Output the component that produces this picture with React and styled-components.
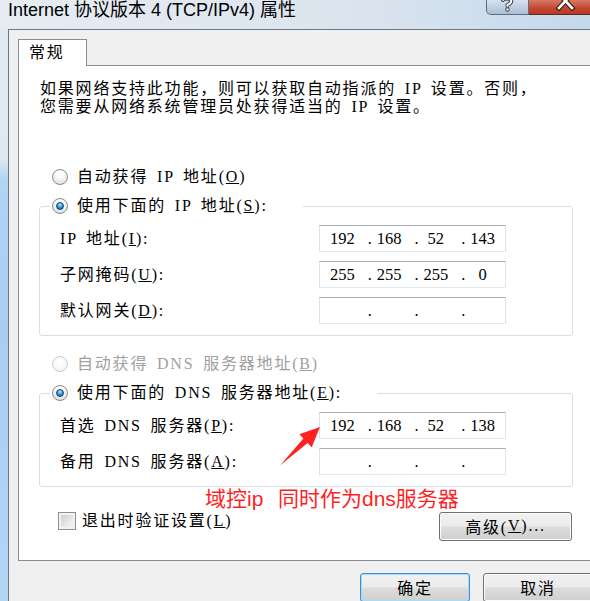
import React from "react";
import styled, { createGlobalStyle } from "styled-components";

const GlobalStyle = createGlobalStyle`
  html, body {
    margin: 0;
    padding: 0;
    background: #f0f0f0;
  }
`;

const uiFont = `"Liberation Serif", "Noto Sans CJK SC", serif`;

const Screen = styled.div`
  width: 590px;
  height: 601px;
  overflow: hidden;
  position: relative;
`;

const Window = styled.div`
  width: 602px;
  display: flex;
  flex-direction: column;
`;

const TitleBar = styled.div`
  height: 29px;
  display: flex;
  justify-content: space-between;
  align-items: flex-start;
  background: linear-gradient(90deg, #e6ecf2 0%, #dbe4ee 60%, #c3d8ec 100%);
`;

const Title = styled.div`
  padding-left: 8px;
  font-family: "Liberation Sans", "Noto Sans CJK SC", sans-serif;
  font-size: 18px;
  line-height: 20px;
  color: #000;
  white-space: nowrap;
`;

const Captions = styled.div`
  display: flex;
`;

const CaptionButton = styled.div`
  width: ${p => p.$width}px;
  height: 15px;
  box-sizing: border-box;
  border: 1px solid ${p => (p.$close ? "#5a2a22" : "#5c6d80")};
  border-top: none;
  border-left-width: ${p => (p.$close ? 0 : 1)}px;
  border-radius: ${p => (p.$close ? "0" : "0 0 0 5px")};
  background: ${p =>
    p.$close
      ? "linear-gradient(180deg, #d77a66 0%, #c4452f 60%, #b73a24 100%)"
      : "linear-gradient(180deg, #d6e2ee 0%, #bccde0 60%, #aabfd5 100%)"};
  overflow: hidden;

  svg {
    display: block;
  }
`;

const Main = styled.div`
  display: flex;
  flex: 1;
`;

const Frame = styled.div`
  width: 8px;
  flex: none;
  background: linear-gradient(
    180deg,
    #e2e9f1 0,
    #e0e8f0 130px,
    #b3d4f3 150px,
    #a9cdf0 300px,
    #b4d6f5 100%
  );
`;

const Body = styled.div`
  flex: 1;
  background: #f0f0f0;
  border-top: 1px solid #68788a;
  border-left: 1px solid #68788a;
  padding: 9px 9px 0 9px;
  display: flex;
  flex-direction: column;
`;

const TabStrip = styled.div`
  display: flex;
`;

const Tab = styled.div`
  width: 69px;
  height: 27px;
  box-sizing: border-box;
  border: 1px solid #898c95;
  border-bottom: none;
  background: #fff;
  margin-bottom: -1px;
  position: relative;
  z-index: 1;
  padding-left: 10px;
  font-family: ${uiFont};
  font-size: 16px;
  letter-spacing: 1.8px;
  line-height: 26px;
`;

const Panel = styled.div`
  height: 496px;
  box-sizing: border-box;
  border: 1px solid #898c95;
  border-right: none;
  background: #fff;
  padding: 14px 20px 0 20px;
  font-family: ${uiFont};
  font-size: 16px;
  letter-spacing: 1.8px;
  word-spacing: 3px;
  color: #000;
  display: flex;
  flex-direction: column;
`;

const Intro = styled.div`
  padding-left: 1px;
  line-height: 18px;
  white-space: nowrap;
`;

const RadioRow = styled.label`
  display: flex;
  align-items: center;
  gap: 9px;
  height: 20px;
  line-height: 20px;
  white-space: nowrap;
  margin-left: ${p => p.$indent || 0}px;
  margin-top: ${p => p.$top || 0}px;
  color: ${p => (p.$disabled ? "#a0a0a0" : "#000")};
`;

const RadioDot = styled.span`
  width: 16px;
  height: 16px;
  flex: none;
  box-sizing: border-box;
  border-radius: 50%;
  border: 1px solid ${p => (p.$disabled ? "#c9c9c9" : "#8a8c8e")};
  background: ${p =>
    p.$disabled
      ? "radial-gradient(circle at 50% 35%, #ffffff, #f1f1f1)"
      : "radial-gradient(circle at 50% 30%, #ffffff 20%, #e6e6e6 70%, #cfcfcf 100%)"};
  display: flex;
  align-items: center;
  justify-content: center;

  &::after {
    content: "";
    display: ${p => (p.$checked ? "block" : "none")};
    width: 8px;
    height: 8px;
    box-sizing: border-box;
    border-radius: 50%;
    border: 1px solid #164569;
    background: radial-gradient(circle at 50% 30%, #b5ecff 0, #3aa0dd 45%, #0e4c7c 100%);
  }
`;

const Group = styled.fieldset`
  margin: 9px 0 0 0;
  padding: 9px 0 11px 20px;
  min-width: 0;
  border: 1px solid #d5dfe5;
  border-radius: 3px;
`;

const Legend = styled.legend`
  margin-left: -10px;
  padding: 0 35px 0 2px;
  background: #fff;
`;

const Rows = styled.div`
  display: grid;
  grid-template-columns: 259px 187px;
  row-gap: 9px;
  align-items: center;
`;

const Label = styled.span`
  white-space: nowrap;
  margin-top: -3px;
`;

const IpBox = styled.div`
  width: 187px;
  height: 27px;
  box-sizing: border-box;
  border: 1px solid;
  border-color: #abadb3 #dfe2e8 #e3e9ef #dfe2e8;
  background: #fff;
  padding-left: 6px;
  display: flex;
  align-items: center;
  font-size: 16.5px;
  letter-spacing: 0;
  word-spacing: 0;
  line-height: 25px;
`;

const IpField = styled.span`
  width: 40.75px;
  flex: none;
  box-sizing: border-box;
  padding-right: 8.25px;
  text-align: center;
`;

const IpDot = styled.span`
  width: 6px;
  flex: none;
  text-align: center;
`;

const BottomRow = styled.div`
  margin-top: 25px;
  margin-right: 1px;
  display: flex;
  justify-content: space-between;
  align-items: flex-start;
`;

const CheckRow = styled.label`
  display: flex;
  align-items: center;
  gap: 6px;
  margin-left: 19px;
  height: 18px;
  line-height: 18px;
  white-space: nowrap;
`;

const CheckBox = styled.span`
  width: 18px;
  height: 18px;
  box-sizing: border-box;
  border: 1px solid #8e8f8f;
  background: linear-gradient(135deg, #c9c9c9 0%, #e8e8e8 60%, #f8f8f8 100%);
  box-shadow: inset 0 0 0 2px #f2f2f2;
`;

const Button = styled.div`
  width: ${p => p.$width}px;
  height: 29px;
  box-sizing: border-box;
  border: 1px solid ${p => (p.$default ? "#3c8fd0" : "#707070")};
  border-radius: 3px;
  background: linear-gradient(180deg, #f2f2f2 0%, #ebebeb 48%, #dddddd 52%, #cfcfcf 100%);
  box-shadow: ${p => (p.$default ? "inset 0 0 0 1px #a7dcf6" : "inset 0 0 0 1px #fcfcfc")};
  display: flex;
  align-items: center;
  justify-content: center;
  padding-bottom: 2px;
  font-family: ${uiFont};
  font-size: 16px;
  letter-spacing: 1.8px;
  color: #000;
  white-space: nowrap;
`;

const Footer = styled.div`
  margin-top: 12px;
  display: flex;
  justify-content: flex-end;
  gap: 13px;
`;

const Note = styled.div`
  position: absolute;
  left: 205px;
  top: 486px;
  font-family: "Liberation Sans", "Noto Sans CJK SC", sans-serif;
  font-size: 21px;
  line-height: 26px;
  word-spacing: 1.5px;
  color: #ff1f1f;
  white-space: pre;
`;

const Arrow = styled.svg`
  position: absolute;
  left: 0;
  top: 0;
  pointer-events: none;
`;

const IpAddress = ({ parts }) => (
  <IpBox>
    {parts.map((part, i) => (
      <React.Fragment key={i}>
        <IpField>{part}</IpField>
        {i < 3 && <IpDot>.</IpDot>}
      </React.Fragment>
    ))}
  </IpBox>
);

const Radio = ({ checked, disabled, children, ...rest }) => (
  <RadioRow $disabled={disabled} {...rest}>
    <RadioDot $checked={checked} $disabled={disabled} />
    <span>{children}</span>
  </RadioRow>
);

const HelpGlyph = () => (
  <svg width="42" height="15" viewBox="0 0 42 15">
    <g fill="none" strokeLinecap="round">
      <path d="M16 0 Q20 -3 24 0 Q25 3 20.5 5 L20.5 6" stroke="#3a4654" strokeWidth="4" />
      <path d="M16 0 Q20 -3 24 0 Q25 3 20.5 5 L20.5 6" stroke="#f5f7f9" strokeWidth="2" />
    </g>
    <circle cx="20.5" cy="9.5" r="2.2" fill="#3a4654" />
    <circle cx="20.5" cy="9.5" r="1.2" fill="#f5f7f9" />
  </svg>
);

const CloseGlyph = () => (
  <svg width="73" height="15" viewBox="0 0 73 15">
    <g strokeLinecap="square">
      <path d="M30 -6 L43 8 M43 -6 L30 8" stroke="#4a1f18" strokeWidth="5" />
      <path d="M30 -6 L43 8 M43 -6 L30 8" stroke="#ffffff" strokeWidth="2.6" />
    </g>
  </svg>
);

const empty = ["", "", "", ""];

export default function App() {
  return (
    <Screen>
      <GlobalStyle />
      <Window>
        <TitleBar>
          <Title>Internet 协议版本 4 (TCP/IPv4) 属性</Title>
          <Captions>
            <CaptionButton $width={43}>
              <HelpGlyph />
            </CaptionButton>
            <CaptionButton $width={73} $close>
              <CloseGlyph />
            </CaptionButton>
          </Captions>
        </TitleBar>
        <Main>
          <Frame />
          <Body>
            <TabStrip>
              <Tab>常规</Tab>
            </TabStrip>
            <Panel>
              <Intro>
                如果网络支持此功能，则可以获取自动指派的 IP 设置。否则，
                <br />
                您需要从网络系统管理员处获得适当的 IP 设置。
              </Intro>

              <Radio $indent={13} $top={51}>
                自动获得 IP 地址(<u>O</u>)
              </Radio>
              <Group>
                <Legend>
                  <Radio checked>
                    使用下面的 IP 地址(<u>S</u>):
                  </Radio>
                </Legend>
                <Rows>
                  <Label>IP 地址(<u>I</u>):</Label>
                  <IpAddress parts={["192", "168", "52", "143"]} />
                  <Label>子网掩码(<u>U</u>):</Label>
                  <IpAddress parts={["255", "255", "255", "0"]} />
                  <Label>默认网关(<u>D</u>):</Label>
                  <IpAddress parts={empty} />
                </Rows>
              </Group>

              <Radio $indent={13} $top={18} disabled>
                自动获得 DNS 服务器地址(<u>B</u>)
              </Radio>
              <Group>
                <Legend>
                  <Radio checked>
                    使用下面的 DNS 服务器地址(<u>E</u>):
                  </Radio>
                </Legend>
                <Rows>
                  <Label>首选 DNS 服务器(<u>P</u>):</Label>
                  <IpAddress parts={["192", "168", "52", "138"]} />
                  <Label>备用 DNS 服务器(<u>A</u>):</Label>
                  <IpAddress parts={empty} />
                </Rows>
              </Group>

              <BottomRow>
                <CheckRow>
                  <CheckBox />
                  <span>退出时验证设置(<u>L</u>)</span>
                </CheckRow>
                <Button $width={133}>
                  高级(<u>V</u>)...
                </Button>
              </BottomRow>
            </Panel>
            <Footer>
              <Button $width={110} $default>
                确定
              </Button>
              <Button $width={110}>取消</Button>
            </Footer>
          </Body>
        </Main>
      </Window>

      <Note>{"域控ip  同时作为dns服务器"}</Note>
      <Arrow width="590" height="601" viewBox="0 0 590 601">
        <polygon
          points="320,427 299.3,434.3 303.4,438.6 280,465.5 307.6,443 311.7,447.3"
          fill="#ff2020"
        />
      </Arrow>
    </Screen>
  );
}
